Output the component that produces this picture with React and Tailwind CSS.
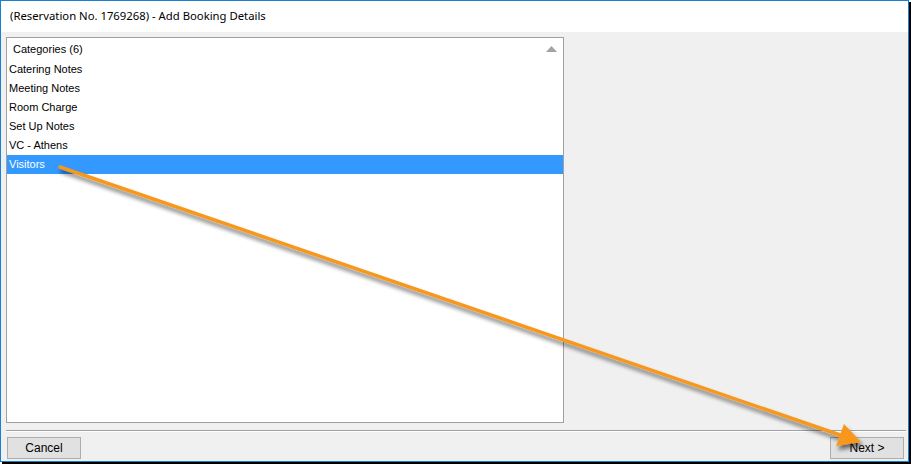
import React from 'react';

const items = ['Catering Notes', 'Meeting Notes', 'Room Charge', 'Set Up Notes', 'VC - Athens', 'Visitors'];

const Arrow = () => (
  <svg className="absolute inset-0 pointer-events-none" width="911" height="464" viewBox="0 0 911 464">
    <defs>
      <filter id="sh" x="-10%" y="-10%" width="120%" height="140%">
        <feGaussianBlur in="SourceAlpha" stdDeviation="2" />
        <feOffset dx="2" dy="4" result="b" />
        <feComponentTransfer>
          <feFuncA type="linear" slope="0.55" />
        </feComponentTransfer>
        <feMerge>
          <feMergeNode />
          <feMergeNode in="SourceGraphic" />
        </feMerge>
      </filter>
    </defs>
    <g filter="url(#sh)">
      <line x1="60" y1="167" x2="843" y2="436" stroke="#f7971c" strokeWidth="3.5" strokeLinecap="round" />
      <polygon points="861,442 836,446 844,424" fill="#f7971c" />
    </g>
  </svg>
);

export default function App() {
  return (
    <div className="relative w-[911px] h-[464px] bg-white" style={{ fontFamily: '"Liberation Sans", Arial, sans-serif' }}>
      <div className="w-[909px] h-[462px] border border-[#1b7fd0] shadow-[2px_2px_0_#000] flex flex-col bg-[#f0f0f0]">
        <div className="h-[31px] bg-white flex items-center pl-[9px] text-[11.3px] text-black" style={{ fontFamily: '"Noto Sans", sans-serif' }}>
          (Reservation No. 1769268) - Add Booking Details
        </div>
        <div className="flex-1 flex flex-col pt-[5px] pl-[5px] pr-[2px]">
          <div className="w-[558px] h-[386px] bg-white border border-[#a0a0a0] flex flex-col">
            <div className="h-[22px] flex items-center justify-between pl-[6px] pr-[4px] text-[11px] text-black">
              <span>Categories (6)</span>
              <svg width="11" height="6" viewBox="0 0 11 6" className="mr-[2px]">
                <polygon points="0,6 5.5,0 11,6" fill="#a3a3a3" />
              </svg>
            </div>
            {items.map((it) => (
              <div
                key={it}
                className={`h-[19px] flex items-center pl-[2px] text-[11px] ${it === 'Visitors' ? 'bg-[#3399ff] text-white' : 'text-black'}`}
              >
                {it}
              </div>
            ))}
          </div>
          <div className="mt-[7px] h-[2px] border-t border-[#a0a0a0] border-b border-b-white" />
          <div className="flex justify-between pt-[5px] pl-[1px] pr-[2px]">
            <button className="w-[74px] h-[22px] bg-[#e1e1e1] border border-[#adadad] text-[12px] text-black">Cancel</button>
            <button className="w-[74px] h-[22px] bg-[#e1e1e1] border border-[#adadad] text-[12px] text-black">Next &gt;</button>
          </div>
        </div>
      </div>
      <Arrow />
    </div>
  );
}
